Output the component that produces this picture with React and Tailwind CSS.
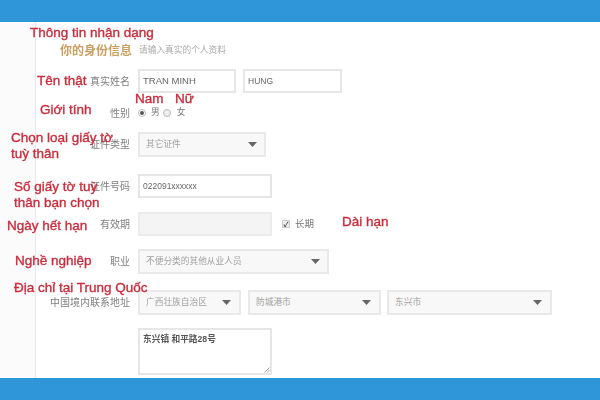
const cjk = "font-['Liberation_Sans','Noto_Sans_CJK_SC',sans-serif]";

const Caret = () => (
  <svg width="9" height="5" viewBox="0 0 9 5" className="shrink-0">
    <path d="M0 0h9L4.5 5z" fill="#666" />
  </svg>
);

const Select = ({ value, className }) => (
  <div className={`h-[25px] flex items-center justify-between pl-[6px] border-2 border-[#e9e9e9] bg-[#f8f8f8] text-[8.7px] text-[#a0a0a0] ${className}`}>
    <span>{value}</span>
    <Caret />
  </div>
);

const Row = ({ label, className = '', children }) => (
  <div className={`flex items-center ${className}`}>
    <div className="w-[94px] text-right text-[10px] text-[#808080] whitespace-nowrap">{label}</div>
    <div className="ml-[8px] flex items-center">{children}</div>
  </div>
);

const Note = ({ className, children }) => (
  <div className={`absolute text-[13.5px] leading-[15.5px] text-[#cc2b3b] font-['Liberation_Sans',sans-serif] [-webkit-text-stroke:0.35px_#cc2b3b] ${className}`}>
    {children}
  </div>
);

export default function App() {
  return (
    <div className={`relative w-[600px] h-[400px] overflow-hidden bg-white flex flex-col ${cjk}`}>
      <div className="h-[22px] shrink-0 bg-[#2f96d9]" />

      <div className="flex-1 flex min-h-0 blur-[0.35px]">
        <div className="w-[36px] shrink-0 bg-[#fbfbfb] border-r border-[#e8e8e8]" />
        <div className="flex-1 pt-[21px]">
          <div className="flex items-center h-[16px] ml-[24px]">
            <span className="text-[12px] font-bold text-[#c9a061]">你的身份信息</span>
            <span className="ml-[7px] text-[8.7px] text-[#aaa]">请输入真实的个人资料</span>
          </div>

          <Row label="真实姓名" className="mt-[11px] -translate-y-[1px]">
            <div className="w-[98px] h-[24px] flex items-center px-[3px] border-2 border-[#e6e6e6] text-[9.5px] text-[#666]">TRAN MINH</div>
            <div className="ml-[7px] w-[99px] h-[24px] flex items-center px-[3px] border-2 border-[#e6e6e6] text-[8.5px] text-[#666]">HUNG</div>
          </Row>

          <Row label="性别" className="mt-[11px] h-[16px]">
            <span className="w-[8px] h-[8px] rounded-full border border-[#bbb] flex items-center justify-center">
              <span className="w-[4px] h-[4px] rounded-full bg-[#555]" />
            </span>
            <span className="ml-[5px] text-[8.7px] text-[#777]">男</span>
            <span className="ml-[3px] w-[8px] h-[8px] rounded-full border border-[#bbb] bg-[#eee]" />
            <span className="ml-[6px] text-[8.7px] text-[#777]">女</span>
          </Row>

          <Row label="证件类型" className="mt-[11px]">
            <Select value="其它证件" className="w-[128px] pr-[7px]" />
          </Row>

          <Row label="证件号码" className="mt-[17px]">
            <div className="w-[134px] h-[24px] flex items-center px-[3px] border-2 border-[#e6e6e6] text-[8.5px] text-[#666]">022091xxxxxx</div>
          </Row>

          <Row label="有效期" className="mt-[14px]">
            <div className="w-[134px] h-[24px] border-2 border-[#ebebeb] bg-[#f4f4f4]" />
            <span className="ml-[10px] w-[8px] h-[8px] flex items-center justify-center border border-[#ccc] bg-[#eee] text-[7px] font-bold leading-none text-[#333]">✓</span>
            <span className="ml-[5px] text-[9.5px] text-[#777]">长期</span>
          </Row>

          <Row label="职业" className="mt-[13px]">
            <Select value="不便分类的其他从业人员" className="w-[191px] pr-[7px]" />
          </Row>

          <Row label="中国境内联系地址" className="mt-[16px]">
            <Select value="广西壮族自治区" className="w-[103px] pr-[8px]" />
            <Select value="防城港市" className="ml-[7px] w-[133px] pr-[8px]" />
            <Select value="东兴市" className="ml-[6px] w-[165px] pr-[8px]" />
          </Row>

          <Row className="mt-[13px]">
            <div className="relative w-[134px] h-[47px] border-2 border-[#e6e6e6] px-[3px] py-[3px] text-[8.7px] font-bold text-[#555]">
              东兴镇 和平路28号
              <svg width="6" height="6" viewBox="0 0 6 6" className="absolute right-0 bottom-0">
                <path d="M0.5 5.5L5.5 0.5M3 5.5L5.5 3" stroke="#888" strokeWidth="0.8" />
              </svg>
            </div>
          </Row>
        </div>
      </div>

      <div className="h-[22px] shrink-0 bg-[#2f96d9]" />

      <Note className="left-[30px] top-[25px]">Thông tin nhận dạng</Note>
      <Note className="left-[37px] top-[73px]">Tên thật</Note>
      <Note className="left-[135px] top-[91px]">Nam</Note>
      <Note className="left-[175px] top-[91px]">Nữ</Note>
      <Note className="left-[40px] top-[102px]">Giới tính</Note>
      <Note className="left-[11px] top-[130px]">Chọn loại giấy tờ<br />tuỳ thân</Note>
      <Note className="left-[14px] top-[179px]">Số giấy tờ tuỳ<br />thân bạn chọn</Note>
      <Note className="left-[7px] top-[218px]">Ngày hết hạn</Note>
      <Note className="left-[342px] top-[214px]">Dài hạn</Note>
      <Note className="left-[15px] top-[253px]">Nghề nghiệp</Note>
      <Note className="left-[14px] top-[280px]">Địa chỉ tại Trung Quốc</Note>
    </div>
  );
}
